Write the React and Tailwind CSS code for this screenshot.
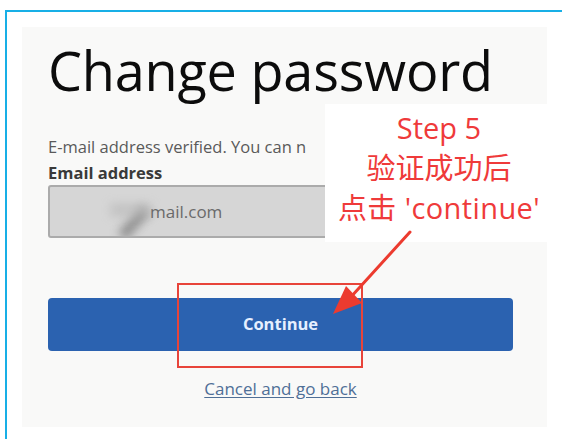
export default function App() {
  return (
    <div className="relative w-[562px] h-[439px] overflow-hidden bg-white font-['Open_Sans','Noto_Sans_CJK_SC',sans-serif]">
      {/* framed page */}
      <div className="ml-[5px] mt-[10px] h-[429px] border-l-2 border-t-2 border-[#18afe6] pl-[15px] pt-[15px]">
        <main className="flex flex-col w-[525px] h-[400px] bg-[#f9f9f8] pl-[26px] pr-[34px] pt-[16px]">
          <h1 className="text-[54px] leading-[54px] font-[500] text-[#0c0c0c] tracking-[-0.2px]">Change password</h1>

          <section className="flex flex-col gap-[4px] mt-[39px]">
            <p className="w-[277px] overflow-hidden whitespace-nowrap text-[16.5px] leading-[22px] text-[#5a5a5a]">
              E-mail address verified. You can n
            </p>
            <label className="text-[16.5px] leading-[22px] font-bold text-[#3a3a3a]">Email address</label>
          </section>

          <div className="relative mt-[1px] h-[53px] w-[465px] rounded-[3px] border-2 border-[#ababab] bg-[#d6d6d6] flex items-center overflow-hidden">
            {/* blurred-out part of the address */}
            <div className="absolute left-[78px] top-[18px] h-[36px] w-[12px] rotate-[42deg] bg-[#7a7a7a] blur-[4px] opacity-70" />
            <div className="absolute left-[60px] top-[16px] h-[14px] w-[42px] bg-[#b8b8b8] blur-[5px] opacity-60" />
            <span className="relative ml-[100px] text-[17px] text-[#6a6a6a]">mail.com</span>
          </div>

          <div className="flex flex-col items-center gap-[28px] mt-[60px]">
            <button className="h-[53px] w-[465px] rounded-[4px] bg-[#2b62b0] text-[16.5px] font-bold text-[#e6efff]">
              Continue
            </button>
            <a className="text-[17px] leading-[20px] text-[#4f6f97] underline underline-offset-2">Cancel and go back</a>
          </div>
        </main>
      </div>

      {/* annotation callout */}
      <div className="absolute left-[325px] top-[104px] w-[228px] h-[138px] bg-white pt-[4px] flex flex-col items-center text-[29px] leading-[40px] text-[#ef3a3a]">
        <div>Step 5</div>
        <div>验证成功后</div>
        <div className="tracking-[0.4px]">点击 'continue'</div>
      </div>

      {/* highlight box around the button */}
      <div className="absolute left-[177px] top-[283px] w-[186px] h-[85px] border-2 border-[#e8443a]" />

      {/* pointer arrow */}
      <svg className="absolute left-0 top-0" width="562" height="439" viewBox="0 0 562 439">
        <line x1="410" y1="232" x2="350" y2="298" stroke="#ec3b2f" strokeWidth="3" strokeLinecap="round" />
        <polygon points="333,314 362,303 346,286" fill="#ec3b2f" />
      </svg>
    </div>
  );
}
